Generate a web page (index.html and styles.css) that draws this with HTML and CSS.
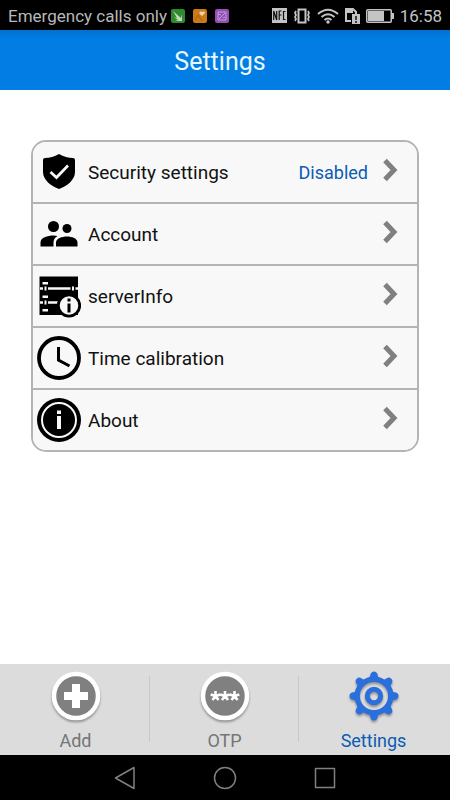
FILE: index.html
```html
<!DOCTYPE html>
<html lang="en">
<head>
<meta charset="utf-8">
<meta name="viewport" content="width=device-width, initial-scale=1">
<title>Settings</title>
<link rel="stylesheet" href="styles.css">
</head>
<body>
<div class="statusbar">
  <span class="carrier">Emergency calls only</span>
  <span class="notices">
    <svg width="14" height="14" viewBox="0 0 14 14" aria-hidden="true"><rect width="14" height="14" rx="2" fill="#2f8a2c"/><path d="M2 2l8 7 1-4v7H4l3-1-4-3 3 1z" fill="#c3d8bb"/></svg>
    <svg width="14" height="14" viewBox="0 0 14 14" aria-hidden="true"><rect width="14" height="14" rx="2" fill="#cb7a17"/><path d="M9 7L6.500 4.500Q6 2 8 2.500L9 3l1-.5q3 0 1.500 2z" fill="#ecd6b5"/><path d="M2 11l3-5 4 6" fill="none" stroke="#a85f0c"/></svg>
    <svg width="14" height="14" viewBox="0 0 14 14" aria-hidden="true"><rect width="14" height="14" rx="2" fill="#9150b2"/><path d="M3 3h8v8H3zM3 5l3 1M4 10l6-6M8 9l2-1" fill="none" stroke="#c79add"/></svg>
  </span>
  <span class="system">
    <svg width="15" height="15" viewBox="0 0 15 15" aria-hidden="true"><rect width="15" height="15" fill="#c4c4c4"/><path d="M1.700 12V3l3 9V3M7.200 12V3H9.500M7.200 7H9.500M13.500 3.500h-2v8h2" fill="none" stroke="#111" stroke-width="1.200"/></svg>
    <svg width="18" height="16" viewBox="0 0 18 16" aria-hidden="true"><path d="M5.500 1.500h7v13h-7z" fill="none" stroke="#c4c4c4" stroke-width="2"/><path d="M3 3l-1 2 1 2-1 2 1 2-1 2M15 3l1 2-1 2 1 2-1 2 1 2" fill="none" stroke="#c4c4c4" stroke-width="1.700"/></svg>
    <svg width="22" height="16" viewBox="0 0 22 16" aria-hidden="true"><path d="M1 6Q11-2.500 21 6M4.500 9Q11 3.500 17.500 9M7.500 12Q11 9 14.500 12" fill="none" stroke="#c4c4c4" stroke-width="2"/><circle cx="11" cy="14" r="1.700" fill="#c4c4c4"/></svg>
    <svg width="15" height="16" viewBox="0 0 15 16" aria-hidden="true"><path d="M6 13H1V1h7l3 3v2" fill="none" stroke="#c4c4c4" stroke-width="2"/><path d="M2 2h6v3H2zM7 6h8v10H7z" fill="#c4c4c4"/><path d="M11 8v4M11 13v2" stroke="#111" stroke-width="1.500"/></svg>
    <svg width="28" height="14" viewBox="0 0 28 14" aria-hidden="true"><rect x=".75" y=".75" width="24.500" height="12.500" rx="1" fill="none" stroke="#c4c4c4" stroke-width="1.500"/><path d="M2 2h16v10H2zM26 4h2v6h-2z" fill="#c4c4c4"/></svg>
  </span>
  <time class="clock">16:58</time>
</div>

<header class="titlebar"><h1>Settings</h1></header>

<main class="content">
  <div class="card">
    <button class="row" type="button">
      <svg class="icon" viewBox="0 0 44 44" aria-hidden="true"><path d="M22 4Q29 8 36 8q2 0 2 2v12c0 8-8 14-16 17C14 36 6 30 6 22V10q0-2 2-2 7 0 14-4z"/><path d="M13.500 22l6 5.500 11.500-12" fill="none" stroke="#f8f8f8" stroke-width="2.700"/></svg>
      <span class="label">Security settings</span><span class="value">Disabled</span>
      <svg class="chevron" viewBox="0 0 16 24" aria-hidden="true"><path d="M2 2.500l9 9.500-9 9.500" /></svg>
    </button>
    <button class="row" type="button">
      <svg class="icon" viewBox="0 0 44 44" aria-hidden="true"><circle cx="16.500" cy="14.500" r="5.500"/><circle cx="30" cy="16.500" r="4.500"/><path d="M3.500 34.500v-4c0-5 7-7 13-7l4 .5c-3 2-4 4-4 6.500v4zM19 34.500v-4c0-4 6-6 11-6s10.500 2 10.500 6v4z"/></svg>
      <span class="label">Account</span>
      <svg class="chevron" viewBox="0 0 16 24" aria-hidden="true"><path d="M2 2.500l9 9.500-9 9.500" /></svg>
    </button>
    <button class="row" type="button">
      <svg class="icon" viewBox="0 0 44 44" aria-hidden="true"><path d="M2.500 2.500h38.500v38.500H2.500z"/><path d="M3 14.500h38M3 28.500h18" stroke="#f8f8f8" stroke-width="2.400"/><path d="M5.500 8h5.500v2.500H5.500zM5.500 21.500h5.500V24H5.500zM5.500 35h5.500v2.500H5.500z" fill="#f8f8f8"/><path d="M8.500 12.500v4M36 12.500v4M8.500 26.500v4" stroke="#000" stroke-width="5"/><path d="M8.500 12.500v4M36 12.500v4M8.500 26.500v4" stroke="#f8f8f8" stroke-width="2"/><circle cx="32" cy="31.500" r="10.700" fill="#f8f8f8" stroke="#000" stroke-width="2.800"/><path d="M30.500 24.500h3v3h-3zM30.500 29.500h3v9h-3z"/></svg>
      <span class="label">serverInfo</span>
      <svg class="chevron" viewBox="0 0 16 24" aria-hidden="true"><path d="M2 2.500l9 9.500-9 9.500" /></svg>
    </button>
    <button class="row" type="button">
      <svg class="icon" viewBox="0 0 44 44" aria-hidden="true"><circle cx="22" cy="22" r="20" fill="none" stroke="#000" stroke-width="3.800"/><path d="M21.500 11v13l11 6" fill="none" stroke="#000" stroke-width="3"/></svg>
      <span class="label">Time calibration</span>
      <svg class="chevron" viewBox="0 0 16 24" aria-hidden="true"><path d="M2 2.500l9 9.500-9 9.500" /></svg>
    </button>
    <button class="row" type="button">
      <svg class="icon" viewBox="0 0 44 44" aria-hidden="true"><circle cx="22" cy="22" r="22"/><circle cx="22" cy="22" r="17" fill="none" stroke="#f8f8f8" stroke-width="2"/><path d="M20 12.500h4v3.500h-4zM20 18h4v13h-4z" fill="#f8f8f8"/></svg>
      <span class="label">About</span>
      <svg class="chevron" viewBox="0 0 16 24" aria-hidden="true"><path d="M2 2.500l9 9.500-9 9.500" /></svg>
    </button>
  </div>
</main>

<nav class="tabs" aria-label="Sections">
  <a class="tab" href="#add">
    <svg class="tabicon" viewBox="0 0 52 52" aria-hidden="true"><circle cx="26" cy="25" r="22" fill="#808080" stroke="#fff" stroke-width="4.500"/><path d="M22 13h8v8h8v8h-8v8h-8v-8h-8v-8h8z" fill="#fff"/></svg>
    <span>Add</span>
  </a>
  <a class="tab" href="#otp">
    <svg class="tabicon" viewBox="0 0 52 52" aria-hidden="true"><circle cx="26" cy="25" r="22" fill="#808080" stroke="#fff" stroke-width="4.500"/><path id="star" d="M26 25v-5M26 25l4.800-1.500M26 25l3 4M26 25l-3 4M26 25l-4.800-1.500" stroke="#fff" stroke-width="2.600"/><use href="#star" x="-9.500"/><use href="#star" x="9.500"/></svg>
    <span>OTP</span>
  </a>
  <a class="tab active" href="#settings" aria-current="page">
    <svg class="tabicon" viewBox="0 0 52 52" aria-hidden="true"><g fill="#2b6fdc" stroke="#2b6fdc"><circle cx="26" cy="25" r="16.800" fill="none" stroke-width="5.400"/><g stroke="none"><path id="tooth" d="M17.500 9Q22 7.500 22.300 4q.7-3.500 3.700-3.500t3.700 3.500q.3 3.500 4.800 5l-3.500 1h-10z"/><use href="#tooth" transform="rotate(45 26 25)"/><use href="#tooth" transform="rotate(90 26 25)"/><use href="#tooth" transform="rotate(135 26 25)"/><use href="#tooth" transform="rotate(180 26 25)"/><use href="#tooth" transform="rotate(225 26 25)"/><use href="#tooth" transform="rotate(270 26 25)"/><use href="#tooth" transform="rotate(315 26 25)"/></g><circle cx="26" cy="25" r="6.700" fill="none" stroke-width="5"/></g></svg>
    <span>Settings</span>
  </a>
</nav>

<div class="softkeys">
  <button type="button" aria-label="Back"><svg width="24" height="24" viewBox="0 0 24 24"><path d="M21 1.500v21L2.500 12z"/></svg></button>
  <button type="button" aria-label="Home"><svg width="24" height="24" viewBox="0 0 24 24"><circle cx="12" cy="12" r="10.500"/></svg></button>
  <button type="button" aria-label="Recent apps"><svg width="24" height="24" viewBox="0 0 24 24"><rect x="2.500" y="2.500" width="19" height="19"/></svg></button>
</div>
</body>
</html>
```
FILE: styles.css
```css
* { box-sizing: border-box; }

body {
  margin: 0;
  min-height: 100vh;
  display: flex;
  flex-direction: column;
  background: #fff;
  color: #111;
  font-family: Roboto, "Liberation Sans", sans-serif;
  font-size: 18px;
}

svg { display: block; flex: none; }
button { font: inherit; color: inherit; border: 0; cursor: pointer; }

.statusbar {
  display: flex;
  align-items: center;
  height: 30px;
  padding: 1px 8px 0;
  background: #000;
  color: #b8b8b8;
}
.carrier { font-size: 17px; }
.notices { display: flex; gap: 8px; margin-left: 4px; }
.system { display: flex; align-items: center; gap: 6px; margin-left: auto; }
.clock { margin-left: 6px; font-size: 17px; color: #c4c4c4; }

.titlebar {
  display: flex;
  align-items: center;
  justify-content: center;
  height: 60px;
  padding: 2px 10px 0 0;
  background: linear-gradient(#0070d0, #027de3 8px);
  color: #e8f8ff;
}
.titlebar h1 { margin: 0; font-size: 25px; font-weight: 400; }

.content { flex: 1; padding: 50px 31px; }

.card {
  display: flex;
  flex-direction: column;
  border: 2px solid #b4b4b4;
  border-radius: 15px;
  overflow: hidden;
  background: #f8f8f8;
}
.row {
  display: flex;
  align-items: center;
  min-height: 62px;
  padding: 0 18px 0 4px;
  border-bottom: 2px solid #b4b4b4;
  background: #f8f8f8;
  text-align: left;
}
.row:last-child { min-height: 60px; border-bottom: 0; }
.icon { width: 44px; height: 44px; margin-right: 7px; }
.label { flex: 1; font-size: 19px; }
.value { margin-right: 15px; color: #0a5cb5; }
.chevron { width: 16px; height: 24px; margin-bottom: 5px; }
.chevron path { fill: none; stroke: #808080; stroke-width: 5; }

.tabs {
  display: grid;
  grid-template-columns: repeat(3, 1fr);
  height: 91px;
  padding: 0 2px 0 1px;
  background: #dcdcdc;
}
.tab {
  display: flex;
  flex-direction: column;
  align-items: center;
  gap: 7px;
  padding-top: 7px;
  color: #757575;
  text-decoration: none;
  background: linear-gradient(#c8c8c8, #c8c8c8) right 12px / 1px 66px no-repeat;
}
.tab.active { color: #0a5cb5; background: none; }
.tabicon { width: 52px; height: 52px; filter: drop-shadow(0 2px 1px #0005); }

.softkeys {
  display: flex;
  align-items: center;
  justify-content: center;
  gap: 76px;
  height: 45px;
  background: #000;
}
.softkeys button { padding: 0; background: none; }
.softkeys svg { fill: none; stroke: #808080; stroke-width: 1.5; stroke-linejoin: round; }
```
